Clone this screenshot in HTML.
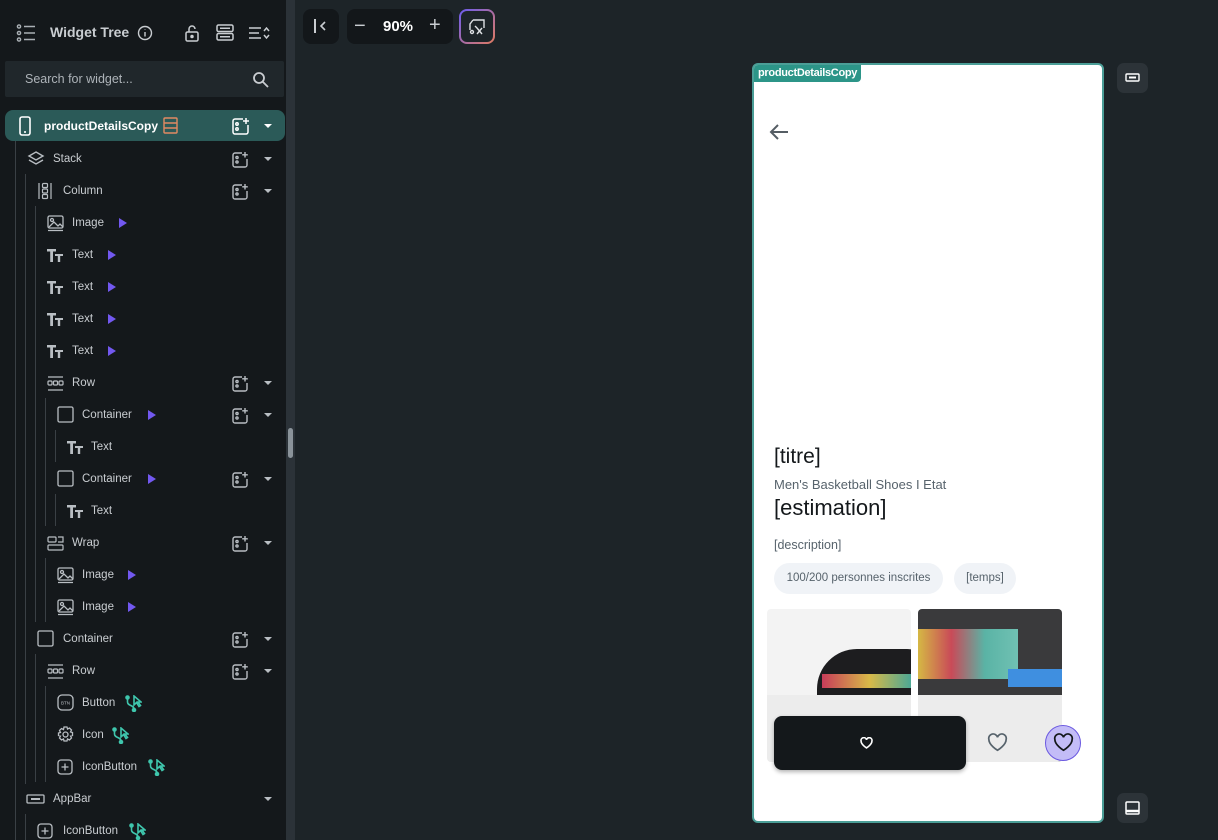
<!DOCTYPE html>
<html><head><meta charset="utf-8"><style>
*{margin:0;padding:0;box-sizing:border-box}
html,body{width:1218px;height:840px;overflow:hidden}
body{background:#1d2428;font-family:"Liberation Sans",sans-serif;position:relative}
.panel{position:absolute;left:0;top:0;width:286px;height:840px;background:#14181b}
.sb{position:absolute;left:286px;top:0;width:9px;height:840px;background:#2b3238}
.thumb{position:absolute;left:288px;top:428px;width:5px;height:30px;border-radius:3px;background:#8a939a}
.r{position:absolute;height:32px;left:0;width:286px;color:#c9cdd1;font-size:11.5px;line-height:32px;margin-top:1px}
.r .l{position:absolute;top:0}
.r svg{position:absolute}
.add{position:absolute;left:232px;top:8px;width:17px;height:17px}
.car{position:absolute;left:264px;top:14px;width:0;height:0;border-left:4px solid transparent;border-right:4px solid transparent;border-top:4px solid #b9bec3}
.play{position:absolute;top:11px;width:0;height:0;border-top:5px solid transparent;border-bottom:5px solid transparent;border-left:8px solid #7258f0}
.vl{position:absolute;width:1px;background:#3a4045}
.tb{position:absolute;background:#13171a;border-radius:8px}
.chip{position:absolute;top:563px;height:31px;border-radius:16px;background:#f0f3f7;color:#57636c;font-size:11.5px;line-height:31px;text-align:center}
</style></head><body>
<div class="panel"></div>
<div class="sb"></div><div class="thumb"></div>

<svg style="position:absolute;left:16px;top:24px" width="20" height="18" viewBox="0 0 20 18" fill="none" stroke="#aab0b5" stroke-width="1.4"><circle cx="3" cy="2.5" r="1.6"/><circle cx="3" cy="9" r="1.6"/><circle cx="3" cy="15.5" r="1.6"/><path d="M8 2.5h11M8 9h11M8 15.5h11"/></svg>
<div style="position:absolute;left:50px;top:24px;color:#c9cdd1;font-size:14px;font-weight:bold">Widget Tree</div>
<svg style="position:absolute;left:137px;top:25px" width="16" height="16" viewBox="0 0 16 16" fill="none" stroke="#c9cdd1" stroke-width="1.4"><circle cx="8" cy="8" r="6.5"/><path d="M8 7v4.5M8 4.5v0.5"/></svg>
<svg style="position:absolute;left:184px;top:24px" width="16" height="18" viewBox="0 0 16 18" fill="none" stroke="#c9cdd1" stroke-width="1.5"><rect x="2" y="8" width="12" height="9" rx="1.5"/><path d="M5 8V5a3 3 0 0 1 6 0"/><circle cx="8" cy="12.5" r="1" fill="#c9cdd1"/></svg>
<svg style="position:absolute;left:216px;top:24px" width="18" height="17" viewBox="0 0 18 17" fill="none" stroke="#c9cdd1" stroke-width="1.5"><rect x="1" y="1" width="16" height="6.5" rx="1.5"/><rect x="1" y="9.5" width="16" height="6.5" rx="1.5"/><path d="M4 4.2h10M4 12.7h10"/></svg>
<svg style="position:absolute;left:248px;top:26px" width="22" height="14" viewBox="0 0 22 14" fill="none" stroke="#c9cdd1" stroke-width="1.5"><path d="M1 2h12M1 7h10M1 12h12M16 5l2.5-3 2.5 3M16 9l2.5 3 2.5-3"/></svg>

<div style="position:absolute;left:5px;top:61px;width:279px;height:36px;background:#20272b;border-radius:2px"></div>
<div style="position:absolute;left:25px;top:72px;color:#aeb4b9;font-size:12.5px">Search for widget...</div>
<svg style="position:absolute;left:252px;top:71px" width="17" height="17" viewBox="0 0 17 17" fill="none" stroke="#c9cdd1" stroke-width="1.8"><circle cx="7" cy="7" r="5"/><path d="M11 11l5 5"/></svg>

<div style="position:absolute;left:5px;top:110px;width:280px;height:31px;background:#2b5a58;border-radius:8px"></div>
<svg style="position:absolute;left:19px;top:116px" width="12" height="20" viewBox="0 0 12 20" fill="none" stroke="#fff" stroke-width="1.6"><rect x="1" y="1" width="10" height="18" rx="2"/><path d="M5 16h2"/></svg>
<div style="position:absolute;left:44px;top:119px;color:#fff;font-size:12px;font-weight:bold">productDetailsCopy</div>
<svg style="position:absolute;left:163px;top:117px" width="15" height="17" viewBox="0 0 15 17" fill="none" stroke="#e28a62" stroke-width="1.4"><rect x="1" y="1" width="13" height="15" rx="1"/><path d="M1 6h13M1 11h13"/></svg>
<svg style="position:absolute;left:232px;top:117px" width="18" height="18" viewBox="0 0 18 18" fill="none" stroke="#fff" stroke-width="1.5"><path d="M11 2H3a2 2 0 0 0-2 2v11a2 2 0 0 0 2 2h11a2 2 0 0 0 2-2V8"/><circle cx="5" cy="7" r="1.2"/><circle cx="5" cy="12" r="1.2"/><path d="M14 1v6M11 4h6"/></svg>
<div class="car" style="left:264px;top:124px;border-top-color:#fff"></div>

<div class="vl" style="left:15px;top:141px;height:699px"></div>
<div class="vl" style="left:25px;top:174px;height:610px"></div>
<div class="vl" style="left:35px;top:206px;height:416px"></div>
<div class="vl" style="left:45px;top:398px;height:128px"></div>
<div class="vl" style="left:55px;top:430px;height:32px"></div>
<div class="vl" style="left:55px;top:494px;height:32px"></div>
<div class="vl" style="left:45px;top:558px;height:64px"></div>
<div class="vl" style="left:35px;top:654px;height:128px"></div>
<div class="vl" style="left:45px;top:686px;height:96px"></div>
<div class="vl" style="left:25px;top:814px;height:26px"></div>

<svg width="0" height="0" style="position:absolute"><defs>
<g id="addi" fill="none" stroke="#b9bec3" stroke-width="1.4"><path d="M10 2H3a2 2 0 0 0-2 2v10a2 2 0 0 0 2 2h10a2 2 0 0 0 2-2V8"/><circle cx="5" cy="6.5" r="1.1"/><circle cx="5" cy="11" r="1.1"/><path d="M13 1v5.5M10.2 3.8h5.6"/></g>
<g id="tt" fill="#b9bec3"><path d="M0 2h9v2.5H6V15H3.2V4.5H0z"/><path d="M8 7h8v2h-2.8v6h-2.4V9H8z"/></g>
<g id="img" fill="none" stroke="#b9bec3" stroke-width="1.3"><rect x="1" y="1" width="15" height="12" rx="1.5"/><circle cx="5" cy="5" r="1.5"/><path d="M2 12l5-5 4 4 2-2 3 3M1 15.5h15"/></g>
<g id="row" fill="none" stroke="#b9bec3" stroke-width="1.2"><path d="M1 2h15M1 15h15"/><rect x="1" y="6" width="4" height="4" rx="1"/><rect x="6.5" y="6" width="4" height="4" rx="1"/><rect x="12" y="6" width="4" height="4" rx="1"/></g>
<g id="box" fill="none" stroke="#b9bec3" stroke-width="1.3"><rect x="1" y="1" width="15" height="15" rx="1.5"/></g>
<g id="br" fill="none" stroke="#3fc6ad" stroke-width="1.6"><circle cx="2.5" cy="2.5" r="1.5" fill="#3fc6ad"/><circle cx="9" cy="15" r="1.5" fill="#3fc6ad"/><path d="M2.5 4v3c0 4 6.5 3 6.5 7"/><path d="M9 1v9l2.5-2.5 2.5 4 1.5-1-2.5-3.5H16z"/></g>
</defs></svg>

<div class="r" style="top:142px"><svg style="left:27px;top:7px" width="18" height="18" viewBox="0 0 18 18" fill="none" stroke="#b9bec3" stroke-width="1.4"><path d="M9 2l7 4-7 4-7-4z"/><path d="M2 10l7 4 7-4"/></svg><span class="l" style="left:53px">Stack</span><svg class="add" viewBox="0 0 17 17"><use href="#addi"/></svg><div class="car"></div></div>
<div class="r" style="top:174px"><svg style="left:38px;top:7px" width="14" height="18" viewBox="0 0 14 18" fill="none" stroke="#b9bec3" stroke-width="1.2"><path d="M1 1v16M13 1v16"/><rect x="4.5" y="1.5" width="5" height="4" rx="1"/><rect x="4.5" y="7" width="5" height="4" rx="1"/><rect x="4.5" y="12.5" width="5" height="4" rx="1"/></svg><span class="l" style="left:63px">Column</span><svg class="add" viewBox="0 0 17 17"><use href="#addi"/></svg><div class="car"></div></div>
<div class="r" style="top:206px"><svg style="left:47px;top:8px" width="17" height="17" viewBox="0 0 17 17"><use href="#img"/></svg><span class="l" style="left:72px">Image</span><div class="play" style="left:119px"></div></div>
<div class="r" style="top:238px"><svg style="left:47px;top:8px" width="17" height="16" viewBox="0 0 17 16"><use href="#tt"/></svg><span class="l" style="left:72px">Text</span><div class="play" style="left:108px"></div></div>
<div class="r" style="top:270px"><svg style="left:47px;top:8px" width="17" height="16" viewBox="0 0 17 16"><use href="#tt"/></svg><span class="l" style="left:72px">Text</span><div class="play" style="left:108px"></div></div>
<div class="r" style="top:302px"><svg style="left:47px;top:8px" width="17" height="16" viewBox="0 0 17 16"><use href="#tt"/></svg><span class="l" style="left:72px">Text</span><div class="play" style="left:108px"></div></div>
<div class="r" style="top:334px"><svg style="left:47px;top:8px" width="17" height="16" viewBox="0 0 17 16"><use href="#tt"/></svg><span class="l" style="left:72px">Text</span><div class="play" style="left:108px"></div></div>
<div class="r" style="top:366px"><svg style="left:47px;top:8px" width="17" height="17" viewBox="0 0 17 17"><use href="#row"/></svg><span class="l" style="left:72px">Row</span><svg class="add" viewBox="0 0 17 17"><use href="#addi"/></svg><div class="car"></div></div>
<div class="r" style="top:398px"><svg style="left:57px;top:7px" width="17" height="17" viewBox="0 0 17 17"><use href="#box"/></svg><span class="l" style="left:82px">Container</span><div class="play" style="left:148px"></div><svg class="add" viewBox="0 0 17 17"><use href="#addi"/></svg><div class="car"></div></div>
<div class="r" style="top:430px"><svg style="left:67px;top:8px" width="17" height="16" viewBox="0 0 17 16"><use href="#tt"/></svg><span class="l" style="left:91px">Text</span></div>
<div class="r" style="top:462px"><svg style="left:57px;top:7px" width="17" height="17" viewBox="0 0 17 17"><use href="#box"/></svg><span class="l" style="left:82px">Container</span><div class="play" style="left:148px"></div><svg class="add" viewBox="0 0 17 17"><use href="#addi"/></svg><div class="car"></div></div>
<div class="r" style="top:494px"><svg style="left:67px;top:8px" width="17" height="16" viewBox="0 0 17 16"><use href="#tt"/></svg><span class="l" style="left:91px">Text</span></div>
<div class="r" style="top:526px"><svg style="left:47px;top:8px" width="17" height="17" viewBox="0 0 17 17" fill="none" stroke="#b9bec3" stroke-width="1.2"><rect x="1" y="2" width="8" height="5" rx="1"/><path d="M11 2h5v5h-5"/><rect x="1" y="10" width="15" height="5" rx="1"/></svg><span class="l" style="left:72px">Wrap</span><svg class="add" viewBox="0 0 17 17"><use href="#addi"/></svg><div class="car"></div></div>
<div class="r" style="top:558px"><svg style="left:57px;top:8px" width="17" height="17" viewBox="0 0 17 17"><use href="#img"/></svg><span class="l" style="left:82px">Image</span><div class="play" style="left:128px"></div></div>
<div class="r" style="top:590px"><svg style="left:57px;top:8px" width="17" height="17" viewBox="0 0 17 17"><use href="#img"/></svg><span class="l" style="left:82px">Image</span><div class="play" style="left:128px"></div></div>
<div class="r" style="top:622px"><svg style="left:37px;top:7px" width="17" height="17" viewBox="0 0 17 17"><use href="#box"/></svg><span class="l" style="left:63px">Container</span><svg class="add" viewBox="0 0 17 17"><use href="#addi"/></svg><div class="car"></div></div>
<div class="r" style="top:654px"><svg style="left:47px;top:8px" width="17" height="17" viewBox="0 0 17 17"><use href="#row"/></svg><span class="l" style="left:72px">Row</span><svg class="add" viewBox="0 0 17 17"><use href="#addi"/></svg><div class="car"></div></div>
<div class="r" style="top:686px"><svg style="left:57px;top:7px" width="17" height="17" viewBox="0 0 17 17" fill="none" stroke="#b9bec3" stroke-width="1.3"><rect x="1" y="1" width="15" height="15" rx="4"/><text x="8.5" y="10.5" font-size="4.5" fill="#b9bec3" stroke="none" text-anchor="middle" font-family="Liberation Sans">BTN</text></svg><span class="l" style="left:82px">Button</span><svg style="left:125px;top:8px" width="17" height="17" viewBox="0 0 17 17"><use href="#br"/></svg></div>
<div class="r" style="top:718px"><svg style="left:57px;top:7px" width="17" height="17" viewBox="0 0 17 17" fill="none" stroke="#b9bec3" stroke-width="1.3"><circle cx="8.5" cy="8.5" r="2.5"/><path d="M7 1h3l.5 2 2-1 2 2-1 2 2 .5v3l-2 .5 1 2-2 2-2-1-.5 2H7l-.5-2-2 1-2-2 1-2-2-.5V7l2-.5-1-2 2-2 2 1z"/></svg><span class="l" style="left:82px">Icon</span><svg style="left:112px;top:8px" width="17" height="17" viewBox="0 0 17 17"><use href="#br"/></svg></div>
<div class="r" style="top:750px"><svg style="left:57px;top:8px" width="16" height="16" viewBox="0 0 16 16" fill="none" stroke="#b9bec3" stroke-width="1.3"><rect x="1" y="1" width="14" height="14" rx="3"/><path d="M8 4.5v7M4.5 8h7"/></svg><span class="l" style="left:82px">IconButton</span><svg style="left:148px;top:8px" width="17" height="17" viewBox="0 0 17 17"><use href="#br"/></svg></div>
<div class="r" style="top:782px"><svg style="left:26px;top:11px" width="19" height="10" viewBox="0 0 19 10" fill="none" stroke="#b9bec3" stroke-width="1.3"><rect x="1" y="1" width="17" height="8" rx="1"/><path d="M5 5h9" stroke-width="2"/></svg><span class="l" style="left:53px">AppBar</span><div class="car"></div></div>
<div class="r" style="top:814px"><svg style="left:37px;top:8px" width="16" height="16" viewBox="0 0 16 16" fill="none" stroke="#b9bec3" stroke-width="1.3"><rect x="1" y="1" width="14" height="14" rx="3"/><path d="M8 4.5v7M4.5 8h7"/></svg><span class="l" style="left:63px">IconButton</span><svg style="left:129px;top:8px" width="17" height="17" viewBox="0 0 17 17"><use href="#br"/></svg></div>

<div class="tb" style="left:303px;top:9px;width:36px;height:35px"></div>
<svg style="position:absolute;left:313px;top:18px" width="16" height="16" viewBox="0 0 16 16" fill="none" stroke="#c9cdd1" stroke-width="2"><path d="M2 1v14"/><path d="M12 4l-4 4 4 4" stroke-width="1.6"/></svg>
<div class="tb" style="left:347px;top:9px;width:106px;height:35px"></div>
<div style="position:absolute;left:354px;top:15px;color:#c9cdd1;font-size:20px">−</div>
<div style="position:absolute;left:383px;top:18px;color:#fff;font-size:15px;font-weight:bold">90%</div>
<div style="position:absolute;left:429px;top:14px;color:#c9cdd1;font-size:20px">+</div>
<div style="position:absolute;left:459px;top:9px;width:36px;height:35px;border-radius:8px;background:linear-gradient(135deg,#6b5cf0,#e07a5f);padding:2px"><div style="width:100%;height:100%;background:#1d2428;border-radius:6px"></div></div>
<svg style="position:absolute;left:468px;top:18px" width="18" height="18" viewBox="0 0 18 18" fill="none" stroke="#dfe2e5" stroke-width="1.4"><path d="M5 2h11v8M2 12V6l3-4"/><circle cx="4" cy="14" r="1.5"/><path d="M9 10l5 6M14 10l-5 6M7 8l2 2"/></svg>

<div style="position:absolute;left:752px;top:63px;width:352px;height:760px;background:#fff;border:2px solid #4b9e97;border-radius:6px;overflow:hidden">
  <div style="position:absolute;left:0;top:0;height:17px;padding:0 4px;background:#2c9588;color:#fff;font-size:11px;line-height:16px;font-weight:bold;border-radius:0 0 4px 0;letter-spacing:-.3px">productDetailsCopy</div>
  <svg style="position:absolute;left:15px;top:58px" width="20" height="18" viewBox="0 0 20 18" fill="none" stroke="#555d64" stroke-width="2"><path d="M19 9H2M9 2L2 9l7 7"/></svg>
  <div style="position:absolute;left:20px;top:380px;font-size:21px;color:#14181b">[titre]</div>
  <div style="position:absolute;left:20px;top:412px;font-size:13px;color:#57636c">Men's Basketball Shoes I Etat</div>
  <div style="position:absolute;left:20px;top:430px;font-size:22px;color:#14181b">[estimation]</div>
  <div style="position:absolute;left:20px;top:473px;font-size:12.5px;color:#57636c">[description]</div>
  <div style="position:absolute;left:13px;top:544px;width:144px;height:153px;background:#f3f3f3;border-radius:4px;overflow:hidden">
    <div style="position:absolute;left:50px;top:40px;width:110px;height:50px;background:#1d1d1f;border-radius:40px 20px 0 0"></div>
    <div style="position:absolute;left:55px;top:65px;width:95px;height:14px;background:linear-gradient(90deg,#c83d5a,#d8b948,#39a5a0)"></div>
    <div style="position:absolute;left:0;top:86px;width:144px;height:67px;background:#ececec"></div>
  </div>
  <div style="position:absolute;left:164px;top:544px;width:144px;height:153px;background:#3a3a3c;border-radius:4px;overflow:hidden">
    <div style="position:absolute;left:0;top:20px;width:100px;height:50px;background:linear-gradient(90deg,#d5b844,#c94a58,#5ab3a5,#70c1b3)"></div>
    <div style="position:absolute;left:90px;top:60px;width:54px;height:18px;background:#3f8fe0"></div>
    <div style="position:absolute;left:0;top:86px;width:144px;height:67px;background:#ececec"></div>
  </div>
</div>
<div class="chip" style="left:774px;width:169px">100/200 personnes inscrites</div>
<div class="chip" style="left:954px;width:62px">[temps]</div>
<div style="position:absolute;left:774px;top:716px;width:192px;height:54px;background:#14181b;border-radius:8px;box-shadow:0 2px 4px rgba(0,0,0,.3)"></div>
<svg style="position:absolute;left:860px;top:737px" width="13" height="12" viewBox="0 0 24 22" fill="none" stroke="#fff" stroke-width="3"><path d="M12 20S2 14 2 7.5A5 5 0 0 1 12 5a5 5 0 0 1 10 2.5C22 14 12 20 12 20z"/></svg>
<svg style="position:absolute;left:987px;top:733px" width="21" height="19" viewBox="0 0 24 22" fill="none" stroke="#57636c" stroke-width="2"><path d="M12 20S2 14 2 7.5A5 5 0 0 1 12 5a5 5 0 0 1 10 2.5C22 14 12 20 12 20z"/></svg>
<div style="position:absolute;left:1045px;top:725px;width:36px;height:36px;border-radius:50%;background:#c3bcf7;border:1.5px solid #6a58e0"></div>
<svg style="position:absolute;left:1053px;top:733px" width="21" height="19" viewBox="0 0 24 22" fill="none" stroke="#14181b" stroke-width="2"><path d="M12 20S2 14 2 7.5A5 5 0 0 1 12 5a5 5 0 0 1 10 2.5C22 14 12 20 12 20z"/></svg>

<div style="position:absolute;left:1117px;top:63px;width:31px;height:30px;background:#2c3338;border-radius:7px"></div>
<svg style="position:absolute;left:1125px;top:73px" width="15" height="9" viewBox="0 0 15 9" fill="none" stroke="#fff" stroke-width="1.4"><rect x="1" y="1" width="13" height="7" rx="1"/><path d="M4 4.5h7" stroke-width="2"/></svg>
<div style="position:absolute;left:1117px;top:793px;width:31px;height:30px;background:#2c3338;border-radius:7px"></div>
<svg style="position:absolute;left:1125px;top:801px" width="15" height="14" viewBox="0 0 15 14" fill="none" stroke="#fff" stroke-width="1.5"><rect x="1" y="1" width="13" height="12" rx="1"/><path d="M1 10h13" stroke-width="2.5"/></svg>
</body></html>
